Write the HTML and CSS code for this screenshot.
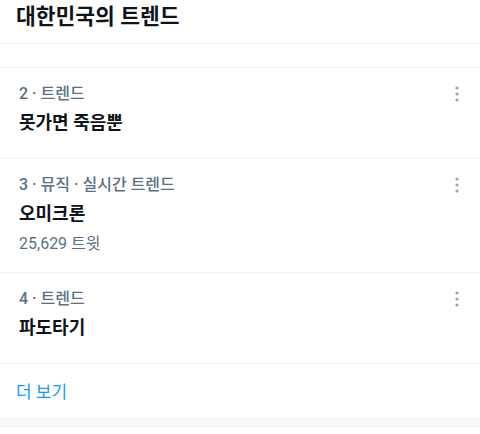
FILE: index.html
```html
<!DOCTYPE html>
<html lang="ko">
<head>
<meta charset="utf-8">
<title>대한민국의 트렌드</title>
<link rel="stylesheet" href="styles.css">
</head>
<body>
<div class="panel">
  <header class="panel-header">
    <h2 class="panel-title">대한민국의 트렌드</h2>
  </header>
  <div class="trend-list">
    <div class="trend-peek"></div>
    <div class="trend">
      <div class="trend-body">
        <div class="trend-meta">2 · 트렌드</div>
        <div class="trend-name">못가면 죽음뿐</div>
      </div>
      <button class="trend-more" aria-label="더 보기">
        <svg viewBox="0 0 20 20" width="20" height="20"><circle cx="10" cy="4" r="1.6"/><circle cx="10" cy="10" r="1.6"/><circle cx="10" cy="16" r="1.6"/></svg>
      </button>
    </div>
    <div class="trend trend--count">
      <div class="trend-body">
        <div class="trend-meta">3 · 뮤직 · 실시간 트렌드</div>
        <div class="trend-name">오미크론</div>
        <div class="trend-count">25,629 트윗</div>
      </div>
      <button class="trend-more" aria-label="더 보기">
        <svg viewBox="0 0 20 20" width="20" height="20"><circle cx="10" cy="4" r="1.6"/><circle cx="10" cy="10" r="1.6"/><circle cx="10" cy="16" r="1.6"/></svg>
      </button>
    </div>
    <div class="trend">
      <div class="trend-body">
        <div class="trend-meta">4 · 트렌드</div>
        <div class="trend-name">파도타기</div>
      </div>
      <button class="trend-more" aria-label="더 보기">
        <svg viewBox="0 0 20 20" width="20" height="20"><circle cx="10" cy="4" r="1.6"/><circle cx="10" cy="10" r="1.6"/><circle cx="10" cy="16" r="1.6"/></svg>
      </button>
    </div>
    <a class="show-more" href="#">더 보기</a>
    <div class="panel-foot"></div>
  </div>
</div>
</body>
</html>
```
FILE: styles.css
```css
* {
  box-sizing: border-box;
}

html, body {
  margin: 0;
  padding: 0;
  background: #ffffff;
}

body {
  font-family: Roboto, "Noto Sans CJK KR", "Noto Sans", sans-serif;
  color: #0f1419;
  width: 480px;
  height: 434px;
  overflow: hidden;
}

.panel {
  display: flex;
  flex-direction: column;
}

.panel-header {
  padding: 3px 16px 12px;
  border-bottom: 1px solid #eff3f4;
}

.panel-title {
  margin: 0;
  font-size: 21.5px;
  line-height: 28px;
  font-weight: 700;
  color: #0f1419;
}

.trend-list {
  display: flex;
  flex-direction: column;
}

.trend-peek {
  height: 24px;
  border-bottom: 1px solid #eff3f4;
}

.trend {
  display: flex;
  align-items: flex-start;
  padding: 16px 13px 25px 19px;
  border-bottom: 1px solid #eff3f4;
}

.trend--count {
  padding-bottom: 18px;
}

.trend-body {
  flex: 1;
  display: flex;
  flex-direction: column;
}

.trend-meta {
  font-size: 16px;
  line-height: 20px;
  font-weight: 500;
  color: #5b7083;
}

.trend-name {
  margin-top: 9px;
  font-size: 18px;
  line-height: 20px;
  font-weight: 700;
  color: #0f1419;
}

.trend-count {
  margin-top: 10px;
  font-size: 16px;
  line-height: 20px;
  color: #5b7083;
}

.trend-more {
  width: 20px;
  height: 20px;
  padding: 0;
  border: 0;
  background: none;
  display: flex;
}

.trend-more svg {
  fill: #98a4ae;
}

.show-more {
  display: block;
  padding: 18px 16px 16px;
  font-size: 17px;
  line-height: 20px;
  color: #1d9bf0;
  text-decoration: none;
  border-bottom: 1px solid #eff3f4;
}

.panel-foot {
  height: 8px;
  background: #f7f9f9;
  border-bottom: 1px solid #eff3f4;
}
```
